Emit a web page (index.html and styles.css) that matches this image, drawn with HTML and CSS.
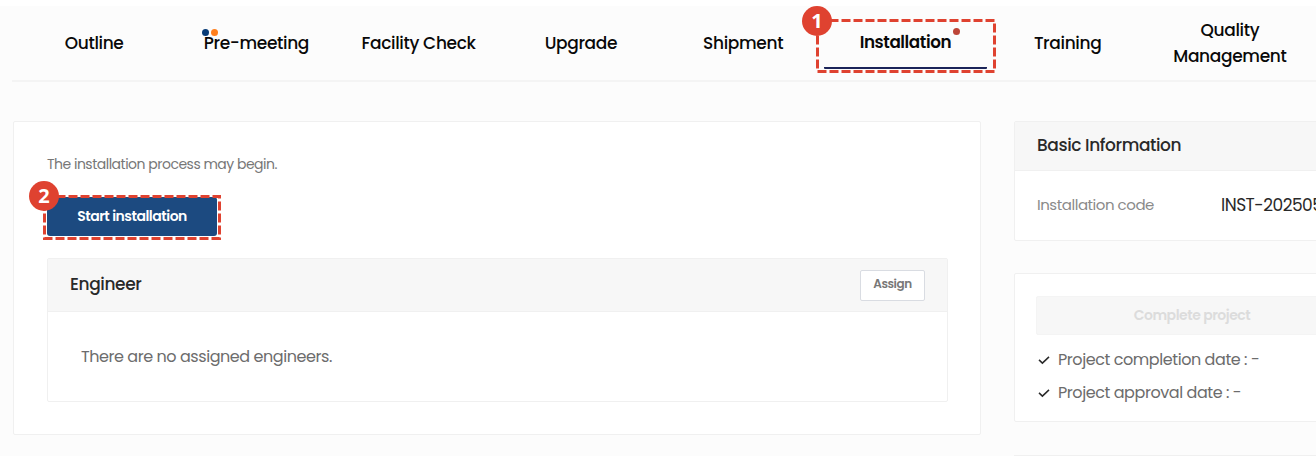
FILE: index.html
```
<!DOCTYPE html>
<html lang="en">
<head>
<meta charset="utf-8">
<title>Installation</title>
<link rel="stylesheet" href="styles.css">
</head>
<body>
<nav class="tabs">
  <a class="tab"><span>Outline</span></a>
  <a class="tab"><span class="label">Pre-meeting<i class="dot navy"></i><i class="dot orange"></i></span></a>
  <a class="tab"><span>Facility Check</span></a>
  <a class="tab"><span>Upgrade</span></a>
  <a class="tab"><span>Shipment</span></a>
  <a class="tab active"><span class="label">Installation<i class="dot red"></i></span></a>
  <a class="tab"><span>Training</span></a>
  <a class="tab"><span>Quality</span><span>Management</span></a>
</nav>
<div class="layout">
  <main class="card main">
    <p class="notice">The installation process may begin.</p>
    <button class="start">Start installation</button>
    <section class="panel">
      <header class="panel-head"><h2>Engineer</h2><button class="assign">Assign</button></header>
      <p class="empty">There are no assigned engineers.</p>
    </section>
  </main>
  <aside class="side">
    <section class="card">
      <header class="side-head"><h2>Basic Information</h2></header>
      <div class="info"><span class="key">Installation code</span><span class="value">INST-202505</span></div>
    </section>
    <section class="card complete">
      <button class="done" disabled>Complete project</button>
      <ul class="checks">
        <li><svg class="check" viewBox="0 0 12 10"><path d="M1 4.9 4.4 8.1 11 1.9"/></svg><span>Project completion date : -</span></li>
        <li><svg class="check" viewBox="0 0 12 10"><path d="M1 4.9 4.4 8.1 11 1.9"/></svg><span>Project approval date : -</span></li>
      </ul>
    </section>
    <section class="next"></section>
  </aside>
</div>
<svg class="callout first" width="180" height="55"><path d="M1.5 1.5H178.5V52.5H1.5Z"/></svg>
<b class="badge one">1</b>
<svg class="callout second" width="178" height="45"><path d="M1.5 1.5H176.5V43.5H1.5Z"/></svg>
<b class="badge two">2</b>
</body>
</html>
```
FILE: styles.css
```
* { box-sizing: border-box; margin: 0; padding: 0; }
body {
  width: 1316px; height: 456px; overflow: hidden; position: relative;
  padding-top: 6px;
  background: linear-gradient(#fff 6px, #fcfcfc 6px);
  font-family: Poppins, Inter, "Liberation Sans", sans-serif;
  color: #222;
}
span, h2, p { white-space: nowrap; }
button { font: inherit; }
.tabs {
  display: grid; grid-template-columns: repeat(8, 162.25px);
  width: 1304px; height: 76px; margin-left: 12px; padding-left: 1px;
  border-bottom: 2px solid #f4f4f4; overflow: hidden;
}
.tab {
  display: flex; flex-direction: column; align-items: center; justify-content: center;
  font-size: 17px; font-weight: 500; line-height: 26px; letter-spacing: -0.34px; color: #090909;
}
.tab.active {
  margin-bottom: 11px; padding-top: 10px; border-bottom: 2.5px solid #1b2459; border-radius: 1px;
  font-size: 16.8px; font-weight: 600; letter-spacing: -0.42px;
}
.label { position: relative; }
.dot { position: absolute; width: 7px; height: 7px; border-radius: 50%; }
.navy { left: -2px; top: -1px; background: #083b76; }
.orange { left: 7px; top: -1px; background: #ff7f1d; }
.red { right: -9px; top: -1px; background: #bd4537; }
.layout { display: flex; gap: 33px; margin: 39px 0 0 13px; align-items: flex-start; }
.card { background: #fff; border: 1px solid #f0f0f0; border-radius: 2px; }
.main { flex: none; width: 968px; height: 314px; padding: 32px 33px; }
.notice { height: 21px; line-height: 21px; font-size: 14px; letter-spacing: -0.5px; color: #777; }
.start {
  display: block; width: 170px; height: 39px; margin-top: 22px; padding-bottom: 1px; border: 0; border-radius: 3px;
  background: #1c4a80; color: #fff; font-size: 14px; font-weight: 600; letter-spacing: -0.48px;
}
.panel { width: 901px; height: 144px; margin-top: 22px; border: 1px solid #f0f0f0; border-radius: 2px; }
.panel-head, .side-head {
  display: flex; align-items: center; justify-content: space-between;
  padding: 0 22px; background: #f7f7f7; border-bottom: 1px solid #f0f0f0;
}
.panel-head { height: 53px; }
h2 { font-size: 17px; font-weight: 500; letter-spacing: -0.39px; line-height: 25px; padding-bottom: 1px; color: #292929; }
.assign {
  width: 65px; height: 31px; padding-bottom: 2px; border: 1px solid #d9dce2; border-radius: 2px; background: #fff;
  color: #777; font-size: 12px; font-weight: 600; letter-spacing: -0.45px;
}
.empty { height: 89px; line-height: 89px; padding-left: 33px; font-size: 16px; letter-spacing: -0.44px; color: #6c6c6c; }
.side { flex: none; width: 356px; display: flex; flex-direction: column; gap: 33px; }
.side-head { height: 49px; }
.info { display: flex; align-items: center; height: 69px; padding-left: 22px; }
.key { width: 184px; padding-bottom: 2px; font-size: 15px; letter-spacing: -0.46px; color: #8a8a8a; }
.value { font-size: 17px; letter-spacing: -0.5px; color: #292929; padding-bottom: 2px; }
.complete { height: 149px; margin-top: -1px; padding: 21px; }
.done {
  display: block; width: 312px; height: 39px; margin-top: 1px; border: 1px solid #f4f4f4; border-radius: 2px;
  background: #f7f7f7; color: #dcdcdc; font-size: 14px; font-weight: 600; letter-spacing: -0.48px;
}
.checks { list-style: none; margin-top: 8px; }
.checks li { display: flex; align-items: center; gap: 8px; height: 33px; padding-left: 2px; font-size: 16px; letter-spacing: -0.43px; color: #6c6c6c; }
.check { width: 12px; height: 10px; fill: none; stroke: #292929; stroke-width: 1.5; }
.next { height: 1px; background: #f0f0f0; }
.callout { position: absolute; fill: none; stroke: #df4230; stroke-width: 3; stroke-dasharray: 9 3; }
.first { left: 816px; top: 19px; }
.second { left: 43px; top: 195px; }
.badge {
  position: absolute; width: 30px; height: 30px; border-radius: 50%; background: #df4230; color: #fff;
  text-align: center; font: 700 20px/30px "Noto Sans", sans-serif;
}
.one { left: 802px; top: 6px; }
.two { left: 29px; top: 181px; }
```
